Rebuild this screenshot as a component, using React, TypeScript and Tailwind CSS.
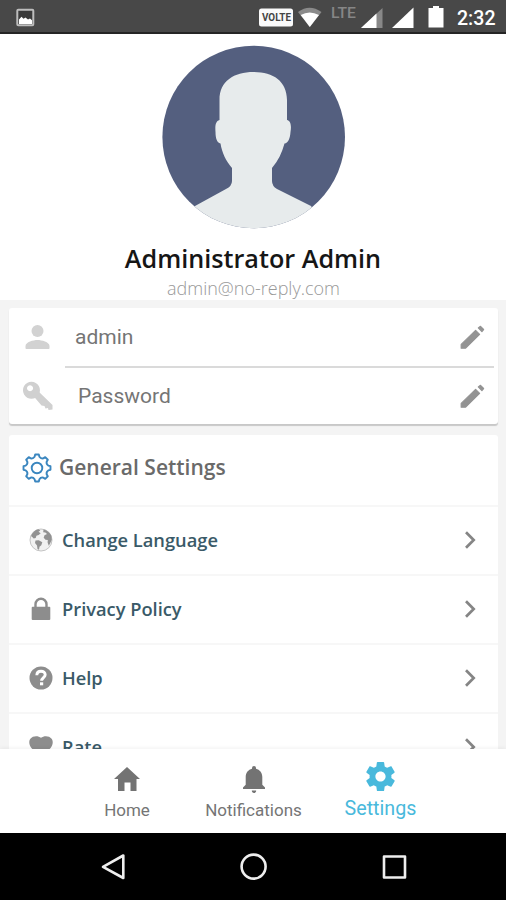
import React from "react";

const OPEN = "font-['Open_Sans','Noto_Sans',sans-serif]";

function gearPath(cx: number, cy: number, outer: number, inner: number, teeth: number) {
  const step = (Math.PI * 2) / teeth;
  const at = (r: number, a: number) => `${(cx + r * Math.sin(a)).toFixed(2)} ${(cy - r * Math.cos(a)).toFixed(2)}`;
  let d = "";
  for (let i = 0; i < teeth; i++) {
    const a = i * step;
    d += `${i ? "L" : "M"}${at(outer, a - step * 0.17)}L${at(outer, a + step * 0.17)}L${at(inner + 0.6, a + step * 0.27)}Q${at(inner - 1, a + step * 0.5)} ${at(inner + 0.6, a + step * 0.73)}`;
  }
  return d + "Z";
}

const Pencil = () => (
  <svg className="h-[31px] w-[31px]" viewBox="0 0 31 31" fill="#939393" stroke="#939393" strokeWidth="1.2" strokeLinejoin="round">
    <path d="M4.2 22.4L18.6 8.4 22.6 12.4 8.4 26.200H4.200zM21.300 5.900L23.500 4.300 26.600 7.500 24.900 9.600z" />
  </svg>
);

const Chevron = () => (
  <svg className="h-5 w-5" viewBox="0 0 20 20" fill="none" stroke="#858585" strokeWidth="2.7">
    <path d="M6 2.300l7.700 7.700L6 17.700" />
  </svg>
);

const Globe = () => (
  <svg className="h-6 w-6" viewBox="0 0 24 24">
    <circle cx="12" cy="12" r="11" fill="#f1f1f1" stroke="#c4c4c4" strokeWidth="1" />
    <path fill="#929292" d="M2 8C3.500 4.500 6 2 9.500 1.300l1.800 1.200-1.800 1.300 2.200 1.400-2 1.800-2.300.8-.7 2.200-2 .5-1.200-1.200zM14.500 1.500c3.500.8 6.500 3 7.800 6.200l.5 4-1.600 3.600-1.400 2.500-1.200-3.200.2-2.500-2.300-.4-1.800-2 .8-2.500 2.500-1.100-1.600-1.700-2.200-.2zM6.500 12.500l3.200-.2 3.600 2-1 3-1.800 1.500-.5 3-1.500-.8-.5-3.500-2-2.500z" />
  </svg>
);

const Lock = () => (
  <svg className="h-6 w-6" viewBox="0 0 24 24">
    <path d="M6.500 11V7.200a5.500 5.500 0 0 1 11 0V11" fill="none" stroke="#8d8d8d" strokeWidth="2.400" />
    <rect x="2.700" y="9.700" width="18.600" height="13.300" rx="1" fill="#8d8d8d" />
  </svg>
);

const Help = () => (
  <svg className="h-6 w-6" viewBox="0 0 24 24">
    <circle cx="12" cy="12" r="11.500" fill="#8d8d8d" />
    <path d="M7.800 9.200c.1-2.600 1.800-4 4.200-4s4.200 1.500 4.200 3.600c0 2.700-3.600 2.900-3.600 6" fill="none" stroke="#fff" strokeWidth="2.900" />
    <rect x="11" y="16.300" width="3.200" height="3" fill="#fff" />
  </svg>
);

const Heart = () => (
  <svg className="h-6 w-6" viewBox="0 0 24 24" fill="#8d8d8d">
    <path d="M12 22.500L2.600 13.200C-.2 10-.3 5.800 1.400 3.700 3.800.600 9.200.500 12 2.800 14.800.500 20.200.600 22.600 3.700c1.700 2.100 1.600 6.300-1.200 9.500z" />
  </svg>
);

const StatusBar = () => (
  <div className="flex h-[34px] shrink-0 border-b-2 border-[#252525] bg-[#484848]">
    <svg className="h-8 w-[506px]" viewBox="0 0 506 32">
      <rect x="17.300" y="9.800" width="16" height="15.500" rx="1" fill="#3a3a3a" stroke="#bdbdbd" strokeWidth="2" />
      <path d="M19 24v-4.500l2.500-2.800 2 2 2-1.200 2.500 2 2-1 2 1.800V24z" fill="#fff" />
      <rect x="259" y="8.500" width="34" height="18" rx="2.500" fill="#fafafa" />
      <text x="262" y="21" textLength="29" lengthAdjust="spacingAndGlyphs" className="font-[Roboto,sans-serif] text-[10px] font-bold" fill="#444">VOLTE</text>
      <path d="M298 12Q309.500 3.500 321.500 12L309.800 27z" fill="#8a8a8a" />
      <path d="M300.700 15Q309.500 10 319 15L309.800 27z" fill="#fff" />
      <text x="331" y="18" textLength="25" lengthAdjust="spacingAndGlyphs" className="font-[Roboto,sans-serif] text-[14px] font-medium" fill="#868686">LTE</text>
      <path d="M382.500 8v20H361z" fill="#888" />
      <path d="M376.500 13.500V28H361z" fill="#fff" />
      <path d="M413.500 7.500V28H392z" fill="#fff" />
      <path d="M433 6h6v2h4.500v19.500h-15V8h4.500z" fill="#fff" />
      <text x="457" y="25" textLength="38.500" lengthAdjust="spacingAndGlyphs" className="font-[Roboto,sans-serif] text-[20px] font-medium" fill="#fff">2:32</text>
    </svg>
  </div>
);

const Row = ({ icon, label }: { icon: React.ReactNode; label: string }) => (
  <div className="flex h-[69px] shrink-0 items-center border-t-2 border-[#f7f7f7] pb-px pl-5 pr-[18px]">
    {icon}
    <span className={`ml-[9px] flex-1 pb-px text-[18.300px] font-semibold text-[#3a5a68] ${OPEN}`}>{label}</span>
    <Chevron />
  </div>
);

export default function App() {
  return (
    <div className="flex h-[900px] w-[506px] flex-col overflow-hidden bg-[#f4f4f4] font-[Roboto,sans-serif]">
      <StatusBar />
      <header className="flex h-[266px] shrink-0 flex-col items-center bg-white pt-[11px]">
        <svg className="h-[184px] w-[185px]" viewBox="0 0 185 184">
          <defs>
            <clipPath id="avatar"><circle cx="92.700" cy="92" r="91.300" /></clipPath>
          </defs>
          <g clipPath="url(#avatar)">
            <rect width="185" height="184" fill="#545f7f" />
            <path fill="#e7ebec" d="M58.500 75V55C58.500 36 73 27 92.500 27S126 36 126 55V75C130 76 130.500 81 129.500 87 129 94 127 98 123.500 98.500 121 108 117 116 111 123V136Q111 141 116 144L150 161 165 184H20L34 161 65 144Q71 141 71 136V123C65 116 61 108 59.500 98.500 56 98 54.500 93 54.500 87 54 81 54.500 76 58.500 75Z" />
          </g>
        </svg>
        <h1 className={`mt-[11px] h-9 text-[25.200px] leading-9 font-semibold whitespace-nowrap text-[#161616] ${OPEN}`}>Administrator Admin</h1>
        <p className={`ml-px h-6 text-[18px] leading-6 font-light whitespace-nowrap text-[#999] ${OPEN}`}>admin@no-reply.com</p>
      </header>

      <section className="mx-[9px] mt-2 flex h-[116px] w-[489px] shrink-0 flex-col rounded-[3px] bg-white shadow-[0_2px_1px_#c8c8c8]">
        <div className="flex h-[58px] items-center pl-[10px] pr-[10px]">
          <svg className="h-[36px] w-[37px]" viewBox="0 0 24 24" fill="#d2d2d2">
            <circle cx="12" cy="8" r="4" />
            <path d="M12 14c-2.670 0-8 1.340-8 4v1.300c0 .4.300.700.700.700h14.600c.4 0 .7-.3.700-.7V18c0-2.660-5.330-4-8-4z" />
          </svg>
          <span className="ml-[19px] flex-1 pt-[2px] text-[21px] text-[#757575]">admin</span>
          <Pencil />
        </div>
        <div className="ml-14 mr-1 h-[2px] shrink-0 bg-[#dadada]" />
        <div className="flex h-[56px] items-center pl-3 pr-[10px]">
          <svg className="h-[34px] w-[34px]" viewBox="0 0 34 34" fill="#d0d0d0">
            <path fillRule="evenodd" d="M10.500 2.800a8.500 8.500 0 1 1-.1 0zM9 6.200a3 3 0 1 0 .1 0z" />
            <path d="M16.500 11.500L31.500 26v4.500l-4 .5-.5-2-2.500.500-1-2.500-3-.5-8.500-10z" />
          </svg>
          <span className="ml-[23px] flex-1 pt-[2px] text-[21px] text-[#757575]">Password</span>
          <Pencil />
        </div>
      </section>

      <main className="mx-[9px] mt-[11px] flex h-[314px] w-[489px] shrink-0 flex-col overflow-hidden rounded-t-[3px] bg-white">
        <div className="flex h-[70px] shrink-0 items-center pl-[13px] pb-[5px]">
          <svg className="h-[30px] w-[30px]" viewBox="0 0 30 30" fill="none" stroke="#3a86bf" strokeWidth="1.900" strokeLinejoin="round">
            <path d={gearPath(15, 15, 13.600, 10.900, 8)} />
            <circle cx="15" cy="15" r="5.300" />
          </svg>
          <h2 className={`ml-[7px] pt-px text-[21px] font-semibold text-[#6a6a6a] ${OPEN}`}>General Settings</h2>
        </div>
        <Row icon={<Globe />} label="Change Language" />
        <Row icon={<Lock />} label="Privacy Policy" />
        <Row icon={<Help />} label="Help" />
        <Row icon={<Heart />} label="Rate" />
      </main>

      <nav className="relative flex h-[84px] shrink-0 justify-center bg-white pl-[2px] shadow-[0_-1px_4px_rgba(0,0,0,0.06)]">
        <div className="flex w-[126px] flex-col items-center pt-[18px] text-[#757575]">
          <svg className="h-6 w-[26px]" viewBox="0 0 26 24" fill="#737373">
            <path d="M13 0L26 12h-3.500v12h-6v-8.500h-6V24h-6.500V12H0z" />
          </svg>
          <span className="mt-[7px] text-[17px] leading-6">Home</span>
        </div>
        <div className="flex w-[127px] flex-col items-center pt-[17px] text-[#757575]">
          <svg className="h-[27px] w-[22px]" viewBox="0 0 22 27" fill="#737373">
            <path d="M0 23v-1.500l2.700-2.700V11C2.700 6.500 5.300 3.700 9 2.700V2a2 2 0 0 1 4 0v.7c3.700 1 6.300 3.800 6.300 8.300v7.800l2.700 2.700V23zM8.800 24.500h4.400c0 1.500-.8 2.500-2.200 2.500s-2.200-1-2.200-2.500z" />
          </svg>
          <span className="mt-[5px] text-[17px] leading-6">Notifications</span>
        </div>
        <div className="flex w-[127px] flex-col items-center pt-[10px] text-[#49b9dc]">
          <svg className="h-[35px] w-[35px]" viewBox="0 0 24 24" fill="currentColor">
            <path d="M19.430 12.980c.04-.32.070-.64.070-.98s-.03-.66-.07-.98l2.110-1.650c.19-.15.240-.42.120-.64l-2-3.460c-.12-.22-.39-.3-.61-.22l-2.490 1c-.52-.4-1.080-.73-1.690-.98l-.38-2.650A.488.488 0 0 0 14 2h-4c-.25 0-.46.180-.49.420l-.38 2.650c-.61.250-1.170.590-1.690.980l-2.490-1c-.23-.09-.49 0-.61.220l-2 3.460c-.13.220-.07.490.120.640l2.110 1.650c-.04.320-.07.650-.07.980s.030.660.070.980l-2.110 1.650c-.19.150-.24.420-.12.640l2 3.460c.12.220.39.300.61.220l2.490-1c.52.400 1.080.730 1.690.980l.38 2.650c.03.240.240.420.490.420h4c.25 0 .46-.18.490-.42l.38-2.650c.61-.25 1.170-.59 1.690-.98l2.490 1c.23.090.490 0 .61-.22l2-3.460c.12-.22.070-.49-.12-.64l-2.110-1.650zM12 15.500c-1.930 0-3.500-1.570-3.500-3.500s1.570-3.500 3.500-3.500 3.500 1.570 3.500 3.500-1.570 3.500-3.500 3.500z" />
          </svg>
          <span className="mt-[3px] text-[19.700px] leading-6">Settings</span>
        </div>
      </nav>

      <footer className="flex h-[67px] shrink-0 items-center justify-center bg-black">
        <svg className="h-8 w-[320px]" viewBox="93 851 320 32" fill="none" stroke="#eee" strokeWidth="2.600" strokeLinejoin="round">
          <path d="M123.300 855.500V878L103 866.800z" />
          <circle cx="253.600" cy="866.600" r="12" />
          <rect x="384" y="856.500" width="21" height="21" />
        </svg>
      </footer>
    </div>
  );
}
